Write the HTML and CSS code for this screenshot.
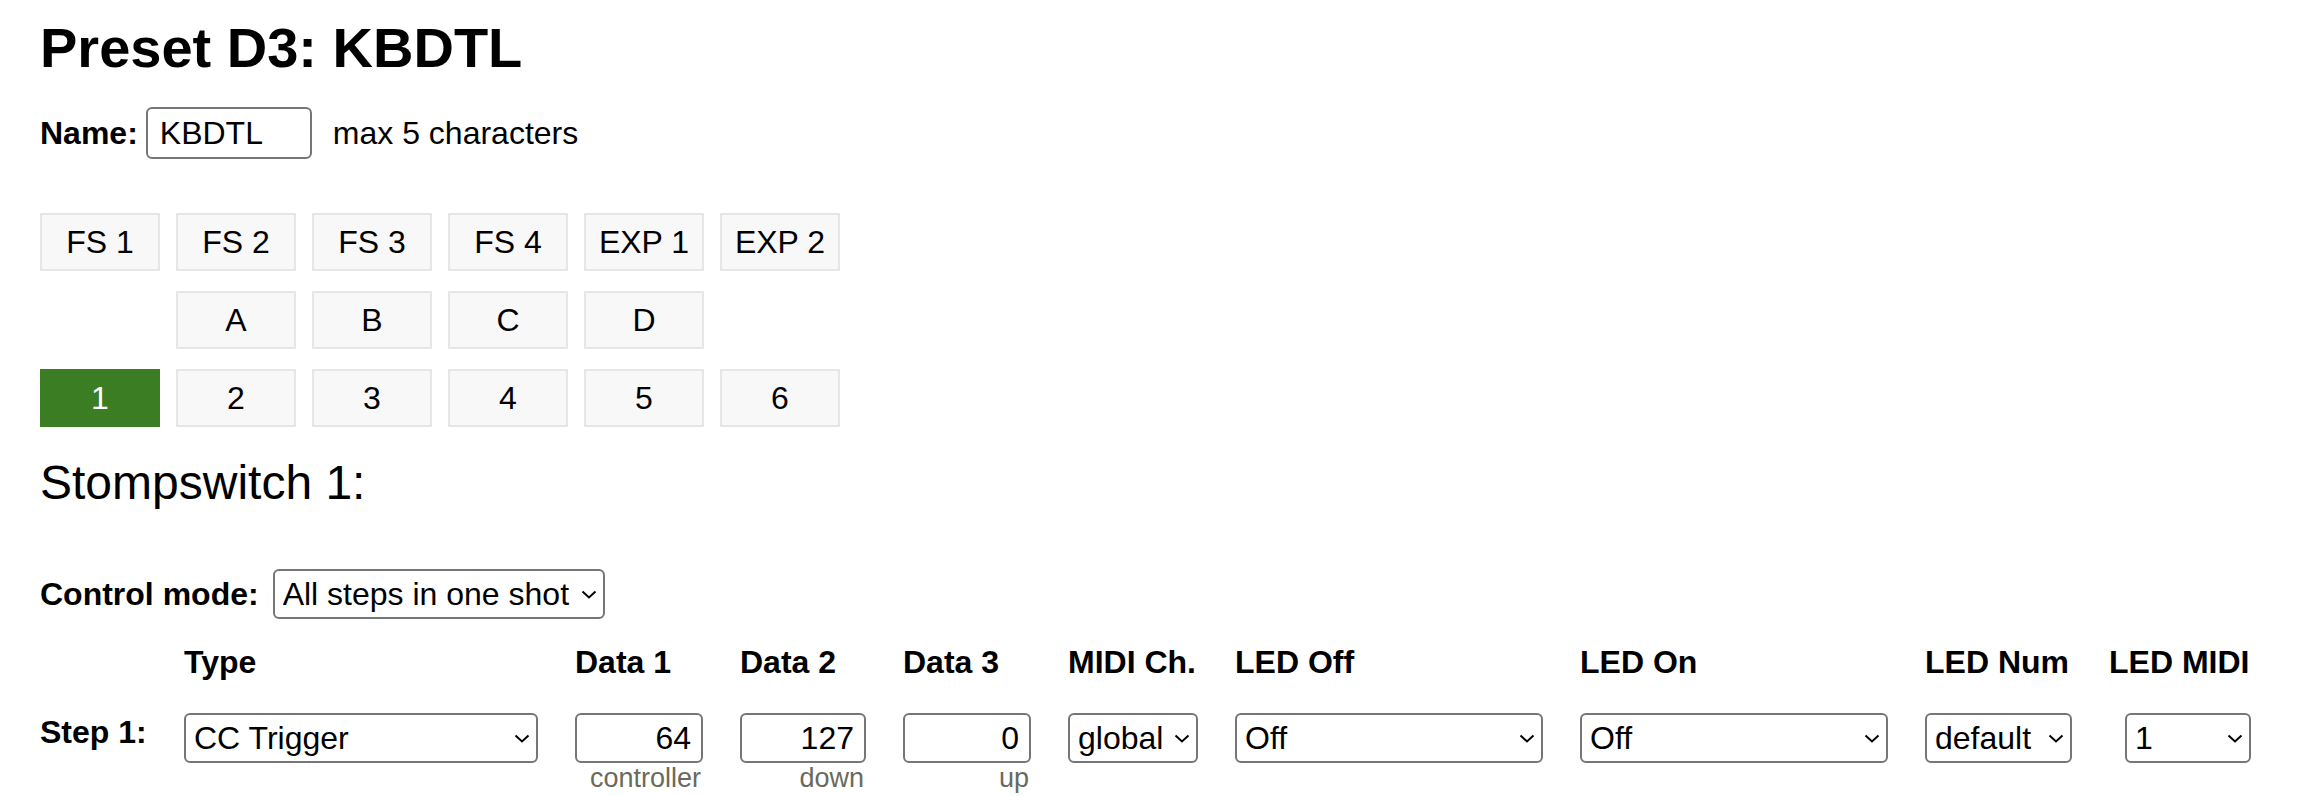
FILE: index.html
```html
<!DOCTYPE html>
<html lang="en">
<head>
    <meta charset="UTF-8">
    <meta name="viewport" content="width=device-width, initial-scale=1.0">
    <title>Preset D3: KBDTL</title>
    <link rel="stylesheet" href="styles.css">
</head>
<body>
    <h1>Preset D3: KBDTL</h1>

    <div class="name-row">
        <label for="preset-name">Name:</label>
        <input type="text" id="preset-name" value="KBDTL" maxlength="5">
        <span class="name-hint">max 5 characters</span>
    </div>

    <div class="pads">
        <button class="pad">FS 1</button>
        <button class="pad">FS 2</button>
        <button class="pad">FS 3</button>
        <button class="pad">FS 4</button>
        <button class="pad">EXP 1</button>
        <button class="pad">EXP 2</button>

        <span></span>
        <button class="pad">A</button>
        <button class="pad">B</button>
        <button class="pad">C</button>
        <button class="pad">D</button>
        <span></span>

        <button class="pad active">1</button>
        <button class="pad">2</button>
        <button class="pad">3</button>
        <button class="pad">4</button>
        <button class="pad">5</button>
        <button class="pad">6</button>
    </div>

    <h2>Stompswitch 1:</h2>

    <div class="mode-row">
        <label for="control-mode">Control mode:</label>
        <span class="sel sel-mode">
            <select id="control-mode">
                <option>All steps in one shot</option>
                <option>One step per press</option>
            </select>
            <svg width="16" height="9" viewBox="0 0 16 9"><path d="M1.5 1.5 L8 7.5 L14.5 1.5" fill="none" stroke="#000" stroke-width="2"/></svg>
        </span>
    </div>

    <div class="steps">
        <span></span>
        <span class="head">Type</span>
        <span class="head">Data 1</span>
        <span class="head">Data 2</span>
        <span class="head">Data 3</span>
        <span class="head">MIDI Ch.</span>
        <span class="head">LED Off</span>
        <span class="head">LED On</span>
        <span class="head">LED Num</span>
        <span class="head">LED MIDI</span>

        <span class="step-label">Step 1:</span>
        <div class="cell">
            <span class="sel">
                <select><option>CC Trigger</option><option>CC Toggle</option><option>Program Change</option></select>
                <svg width="16" height="9" viewBox="0 0 16 9"><path d="M1.5 1.5 L8 7.5 L14.5 1.5" fill="none" stroke="#000" stroke-width="2"/></svg>
            </span>
        </div>
        <div class="cell">
            <input type="text" class="num" value="64">
            <span class="hint">controller</span>
        </div>
        <div class="cell">
            <input type="text" class="num" value="127">
            <span class="hint">down</span>
        </div>
        <div class="cell">
            <input type="text" class="num" value="0">
            <span class="hint">up</span>
        </div>
        <div class="cell">
            <span class="sel">
                <select><option>global</option><option>1</option></select>
                <svg width="16" height="9" viewBox="0 0 16 9"><path d="M1.5 1.5 L8 7.5 L14.5 1.5" fill="none" stroke="#000" stroke-width="2"/></svg>
            </span>
        </div>
        <div class="cell">
            <span class="sel">
                <select><option>Off</option><option>Red</option><option>Green</option></select>
                <svg width="16" height="9" viewBox="0 0 16 9"><path d="M1.5 1.5 L8 7.5 L14.5 1.5" fill="none" stroke="#000" stroke-width="2"/></svg>
            </span>
        </div>
        <div class="cell">
            <span class="sel">
                <select><option>Off</option><option>Red</option><option>Green</option></select>
                <svg width="16" height="9" viewBox="0 0 16 9"><path d="M1.5 1.5 L8 7.5 L14.5 1.5" fill="none" stroke="#000" stroke-width="2"/></svg>
            </span>
        </div>
        <div class="cell">
            <span class="sel">
                <select><option>default</option><option>1</option></select>
                <svg width="16" height="9" viewBox="0 0 16 9"><path d="M1.5 1.5 L8 7.5 L14.5 1.5" fill="none" stroke="#000" stroke-width="2"/></svg>
            </span>
        </div>
        <div class="cell">
            <span class="sel sel-narrow">
                <select><option>1</option><option>2</option></select>
                <svg width="16" height="9" viewBox="0 0 16 9"><path d="M1.5 1.5 L8 7.5 L14.5 1.5" fill="none" stroke="#000" stroke-width="2"/></svg>
            </span>
        </div>
    </div>
</body>
</html>
```

FILE: styles.css
```css
body {
    font-family: 'Liberation Sans', Arial, Helvetica, sans-serif;
    font-size: 32px;
    margin: 0;
    padding: 16px 40px 0;
    color: #000;
    background-color: #fff;
}

h1 {
    font-size: 56px;
    line-height: 64px;
    margin: 0 0 27px;
}

h2 {
    font-size: 48px;
    font-weight: normal;
    line-height: 55px;
    margin: 28px 0 59px;
}

input,
select,
button {
    font: inherit;
    color: #000;
}

.name-row {
    display: flex;
    align-items: center;
}

.name-row label {
    font-weight: bold;
    margin-right: 8px;
}

#preset-name {
    width: 166px;
    height: 52px;
    box-sizing: border-box;
    padding: 0 12px;
    border: 2px solid #767676;
    border-radius: 6px;
}

.name-hint {
    margin-left: 21px;
}

.pads {
    display: grid;
    grid-template-columns: repeat(6, 120px);
    grid-auto-rows: 58px;
    gap: 20px 16px;
    margin-top: 54px;
}

.pad {
    background-color: #f8f8f8;
    border: 2px solid #e6e6e6;
    padding: 0;
    cursor: pointer;
}

.pad.active {
    background-color: #3a7d23;
    border-color: #3a7d23;
    color: #fff;
}

.mode-row {
    display: flex;
    align-items: center;
}

.mode-row label {
    font-weight: bold;
    margin-right: 14px;
}

.sel {
    position: relative;
    display: inline-block;
    width: 100%;
}

.sel select {
    appearance: none;
    -webkit-appearance: none;
    width: 100%;
    height: 50px;
    box-sizing: border-box;
    padding: 0 30px 0 8px;
    border: 2px solid #767676;
    border-radius: 6px;
    background-color: #fff;
    text-align: left;
}

.sel svg {
    position: absolute;
    right: 8px;
    top: 50%;
    margin-top: -4px;
    pointer-events: none;
}

.sel-mode {
    width: 332px;
}

.sel-narrow {
    width: 126px;
}

.steps {
    display: grid;
    grid-template-columns: 107px 354px 128px 126px 128px 130px 308px 308px 147px 142px;
    column-gap: 37px;
    align-items: start;
    margin-top: 25px;
}

.head {
    font-weight: bold;
    line-height: 37px;
    margin-bottom: 32px;
    white-space: nowrap;
}

.step-label {
    font-weight: bold;
    line-height: 37px;
    margin-top: 1px;
    white-space: nowrap;
}

.cell {
    display: flex;
    flex-direction: column;
    align-items: flex-end;
}

.num {
    width: 100%;
    height: 50px;
    box-sizing: border-box;
    padding: 0 10px;
    border: 2px solid #767676;
    border-radius: 6px;
    text-align: right;
}

.hint {
    font-size: 27px;
    line-height: 31px;
    color: #6a6a5c;
    padding-right: 2px;
}
```
